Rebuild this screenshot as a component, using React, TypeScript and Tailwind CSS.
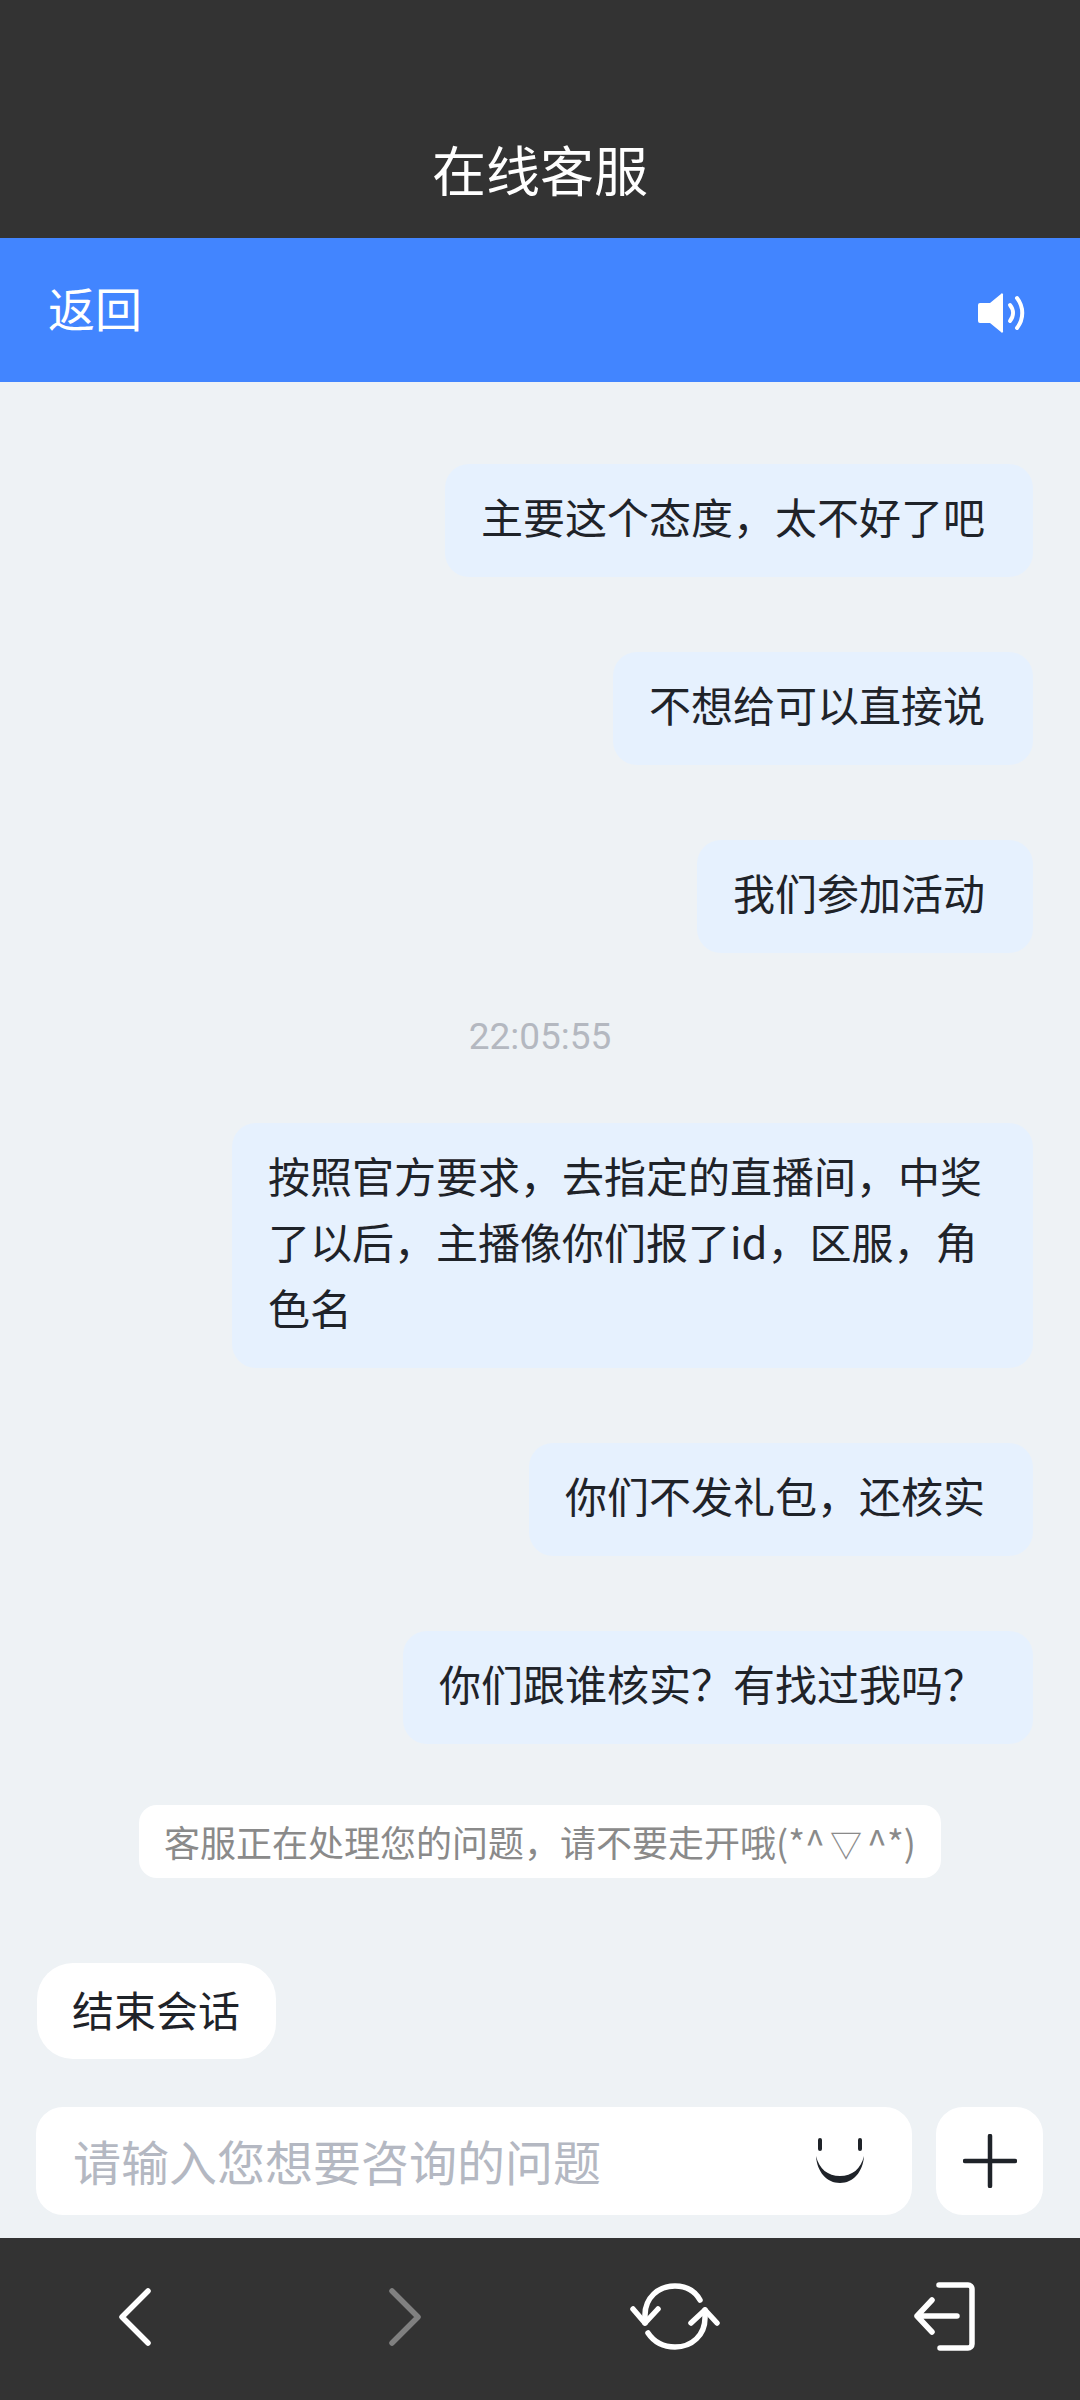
const messages = [
  "主要这个态度，太不好了吧",
  "不想给可以直接说",
  "我们参加活动",
];

const laterMessages = [
  "按照官方要求，去指定的直播间，中奖了以后，主播像你们报了id，区服，角色名",
  "你们不发礼包，还核实",
  "你们跟谁核实？有找过我吗？",
];

function Bubble({ text }: { text: string }) {
  return (
    <div className="flex justify-end pr-[47px]">
      <div className="max-w-[801px] rounded-[24px] bg-[#e6f1fe] pt-[19px] pr-[48px] pb-[28px] pl-[36px] text-[42px] leading-[66px] text-[#1f2329]">
        {text}
      </div>
    </div>
  );
}

export default function App() {
  return (
    <div className="flex h-[2400px] w-[1080px] flex-col overflow-hidden bg-[#eef2f5] font-['Noto_Sans_CJK_SC','Noto_Sans',sans-serif] font-normal">
      {/* Title */}
      <div className="flex h-[238px] items-end justify-center bg-[#333333] pb-[31px] text-[54px] leading-[76px] text-white">
        在线客服
      </div>

      {/* Blue header */}
      <div className="flex h-[144px] items-center justify-between bg-[#4285ff] pl-[48px] pr-[54px] text-white">
        <span className="pb-[6px] text-[47px] leading-[66px]">返回</span>
        <svg width="48" height="40" viewBox="0 0 48 40" fill="none" className="mt-[6px]">
          <path d="M2 10h10L23 1a1 1 0 0 1 2 1v36a1 1 0 0 1-2 1L12 30H2a2 2 0 0 1-2-2V12a2 2 0 0 1 2-2z" fill="#fff" />
          <path d="M32 12c4 5 4 11 0 16" stroke="#fff" strokeWidth="4" strokeLinecap="round" />
          <path d="M39 5c7 9 7 21 0 30" stroke="#fff" strokeWidth="4" strokeLinecap="round" />
        </svg>
      </div>

      {/* Conversation */}
      <div className="flex flex-1 flex-col pt-[82px]">
        <div className="flex flex-col gap-[75px]">
          {messages.map((m) => (
            <Bubble key={m} text={m} />
          ))}
        </div>
        <div className="mt-[60px] mb-[62px] text-center font-['Roboto',sans-serif] text-[37px] leading-[48px] text-[#b4b8c0]">
          22:05:55
        </div>
        <div className="flex flex-col gap-[75px]">
          {laterMessages.map((m) => (
            <Bubble key={m} text={m} />
          ))}
        </div>

        <div className="mt-[61px] flex justify-center">
          <div className="flex h-[73px] w-[802px] items-center rounded-[18px] bg-white pl-[25px] text-[36px] leading-[54px] whitespace-nowrap text-[#8a8a8a]">
            <span>
              客服正在处理您的问题，请不要走开哦(*^<span className="mx-[5px] text-[32px]">▽</span>^*)
            </span>
          </div>
        </div>

        <div className="mt-[85px] pl-[37px]">
          <div className="inline-block rounded-[36px] bg-white pt-[13px] pr-[36px] pb-[17px] pl-[35px] text-[42px] leading-[66px] text-[#1f2329]">
            结束会话
          </div>
        </div>

        {/* Input row */}
        <div className="mt-[48px] flex h-[108px] gap-[24px] pl-[36px] pr-[37px]">
          <div className="flex w-[876px] items-center justify-between rounded-[27px] bg-white pl-[37px] pr-[46px]">
            <span className="pb-[2px] text-[48px] leading-[66px] text-[#b4b8c2]">请输入您想要咨询的问题</span>
            <svg width="52" height="46" viewBox="0 0 52 46" fill="none">
              <path d="M6 2v9M46 2v9" stroke="#1f2329" strokeWidth="4" strokeLinecap="round" />
              <path d="M2 18C3 34 13 45 26 45s23-11 24-27c-3 13-12 20-24 20S5 31 2 18z" fill="#1f2329" />
            </svg>
          </div>
          <div className="flex w-[107px] items-center justify-center rounded-[27px] bg-white">
            <svg width="54" height="54" viewBox="0 0 54 54" fill="none">
              <path d="M27 2v50M2 27h50" stroke="#1f2329" strokeWidth="4.5" strokeLinecap="round" />
            </svg>
          </div>
        </div>
      </div>

      {/* Bottom toolbar */}
      <div className="mt-auto grid h-[162px] grid-cols-4 items-center bg-[#333333] pb-[4px]">
        <div className="flex justify-center">
          <svg width="36" height="60" viewBox="0 0 36 60" fill="none">
            <path d="M31 4 5 30l26 26" stroke="#fff" strokeWidth="5.5" strokeLinecap="round" strokeLinejoin="round" />
          </svg>
        </div>
        <div className="flex justify-center">
          <svg width="36" height="60" viewBox="0 0 36 60" fill="none">
            <path d="M5 4l26 26L5 56" stroke="#808080" strokeWidth="5.5" strokeLinecap="round" strokeLinejoin="round" />
          </svg>
        </div>
        <div className="flex justify-center">
          <svg width="90" height="68" viewBox="0 0 90 68" fill="none">
            <path d="M15 40V32C15 15 28 3 45 3c11 0 20 5 25 14" stroke="#fff" strokeWidth="5.5" strokeLinecap="round" />
            <path d="M3 26l12 14 13-14" stroke="#fff" strokeWidth="5.5" strokeLinecap="round" strokeLinejoin="round" />
            <path d="M75 27v8C75 52 62 64 45 64c-11 0-21-5-27-14" stroke="#fff" strokeWidth="5.5" strokeLinecap="round" />
            <path d="M61 40l14-13 12 13" stroke="#fff" strokeWidth="5.5" strokeLinecap="round" strokeLinejoin="round" />
          </svg>
        </div>
        <div className="flex justify-center">
          <svg width="62" height="70" viewBox="0 0 62 70" fill="none">
            <path d="M25 3h29a4 4 0 0 1 4 4v55a4 4 0 0 1-4 4H26" stroke="#fff" strokeWidth="5.5" strokeLinecap="round" />
            <path d="M43 34H3M18 18 3 34l15 16" stroke="#fff" strokeWidth="5.5" strokeLinecap="round" strokeLinejoin="round" />
          </svg>
        </div>
      </div>
    </div>
  );
}
